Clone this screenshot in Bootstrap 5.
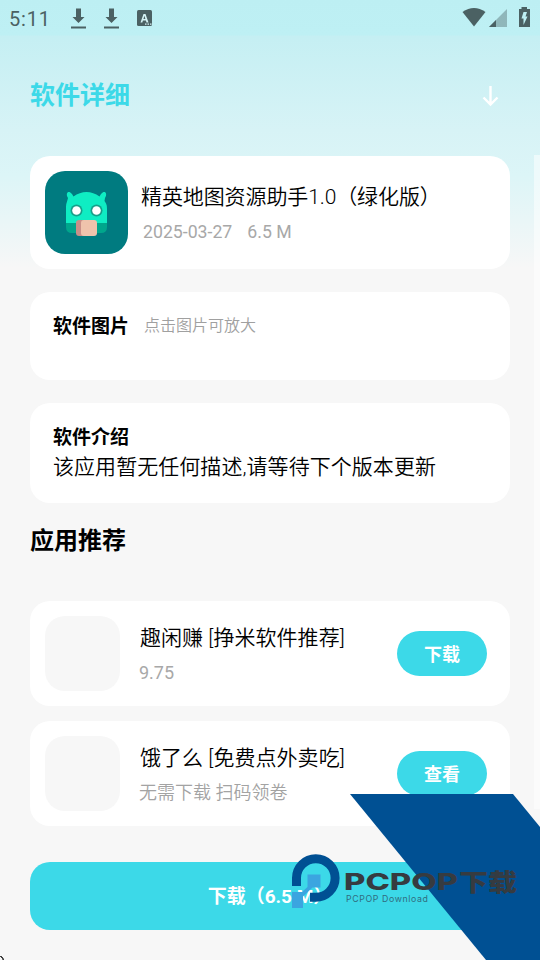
<!DOCTYPE html>
<html lang="zh-CN">
<head>
<meta charset="utf-8">
<meta name="viewport" content="width=device-width, initial-scale=1">
<title>软件详细</title>
<link href="https://cdn.jsdelivr.net/npm/bootstrap@5.3.0/dist/css/bootstrap.min.css" rel="stylesheet">
<style>
body{font-family:Roboto,"Noto Sans CJK SC",sans-serif;background:#f7f7f7;color:#000}
.screen{width:540px;height:960px;background:linear-gradient(#bdeff3 0,#bef0f4 35px,#c5eff3 36px,#d7f3f6 130px,#dcf5f7 175px,#f7f7f7 268px)}
.status{height:36px;color:#4b6163;font-size:20px;letter-spacing:.8px}
.status svg,.head svg,.logo,.brand{display:block;flex:none}
.clock{width:59px;line-height:36px;padding-top:1px;padding-left:9px}
.head{height:120px}
.page-title{font-size:25px;line-height:36px;font-weight:700;color:#3cd9e8;padding:42px 0 0 30px}
.content{width:480px}
.panel{background:#fff;border-radius:20px}
.app{height:113px;padding:15px}
.app-info{padding:11px 0 0 13px}
.shots{height:88px;margin-top:23px;padding:23px 23px;gap:15px}
.about{height:100px;margin-top:23px;padding:23px 23px}
.name{font-size:21px;line-height:30px;font-weight:350;white-space:nowrap}
.app .name{letter-spacing:-.1px}
.about .name{margin-top:2px;letter-spacing:.05px}
.sub{font-size:18px;line-height:24px;color:#a3a3a3;white-space:nowrap;font-weight:350}
.sub-num{font-weight:400;color:#a8a8a8}
.app .sub{font-size:17.700px;gap:15px;margin-top:8px;padding-left:2px}
.ttl{font-size:19px;line-height:24px;font-weight:700}
.hint{font-size:16px;line-height:22px;font-weight:350;color:#a0a0a0}
.section-title{font-size:24px;line-height:34px;font-weight:700;margin-top:21px;margin-bottom:43px}
.rec{height:105px;padding:15px 23px 15px 15px}
.rec + .rec{margin-top:15px}
.rec-info{margin-left:19px}
.rec-info .name{padding-left:1px;letter-spacing:.05px}
.thumb{width:75px;height:75px;border-radius:20px;background:#f7f7f7;flex:none}
.pill{width:90px;height:45px;border-radius:23px;background:#3cd9e8;color:#fff;font-size:18px;font-weight:700;padding:2px 0 0}
.main-btn{height:68px;border-radius:20px;background:#3cd9e8;color:#fff;font-size:19px;font-weight:700;margin-top:36px;padding:2px 0 0}
.track{right:0;top:155px;width:6px;height:654px;background:rgba(255,255,255,.5)}
.brand{left:280px;top:790px}
.corner{left:0;bottom:0}
</style>
<script src="https://cdn.jsdelivr.net/npm/bootstrap@5.3.0/dist/js/bootstrap.bundle.min.js"></script>
</head>
<body>
<div class="screen position-relative overflow-hidden">
  <div class="status d-flex">
    <div class="clock">5:11</div>
    <svg width="120" height="36" viewBox="59 0 120 36" fill="currentColor"><g id="dl"><path d="M76 8.500h5v8.500h3.500l-6 6-6-6h3.500z"/><path d="M71 26.500h15v2H71z"/></g><use href="#dl" x="33"/><rect x="137" y="10" width="15" height="16" rx="1.500"/><path d="M140.500 22.500l3-8.500h2l3 8.500h-2l-.6-2h-3l-.6 2zm2.900-3.600h2l-1-3.200zM145 23.500h1.500v1.300H145zm2.500 0h1.500v1.300h-1.500zm2.500 0h1.500v1.300H150z" fill="#d6f4f6"/></svg>
    <svg class="ms-auto" width="80" height="36" viewBox="460 0 80 36" fill="currentColor"><path d="M462.500 12q11.500-8 23 0L474 26.500z"/><path d="M507 9v18h-18z" opacity=".4"/><path d="M496 20v7h-7z"/><path d="M519 9h2.500V7h5.500v2h3v18h-11z"/><path d="M523.500 12h3.500l-1.500 4.500h2l-4 8.500v-6.500h-2z" fill="#bdeff3"/></svg>
  </div>
  <div class="head d-flex justify-content-between">
    <div class="page-title">软件详细</div>
    <svg width="60" height="120" viewBox="480 36 60 120" fill="none" stroke="#fff" stroke-width="2.400"><path d="M490.500 86v18M483.500 97.500l7 7 7-7"/></svg>
  </div>
  <main class="content mx-auto">
    <section class="panel app d-flex">
      <svg class="logo" width="83" height="83" viewBox="0 0 83 83"><rect width="83" height="83" rx="20" fill="#007b80"/><path d="M21 53V36c0-4 1.500-6 2-9-3-5 .5-8.500 4-4l1.500 2.500c8-6 18-6 26 0L56 23c3.500-4.500 7-1 4 4l-.5 3c2 3 2.500 4 2.500 8v15z" fill="#0fedc3"/><path d="M21 52h41v4q0 6-6 6H27q-6 0-6-6z" fill="#00a68c"/><circle cx="31.500" cy="39.500" r="6" fill="#17a08a"/><circle cx="51.500" cy="39.500" r="6" fill="#17a08a"/><circle cx="31.500" cy="39.500" r="4.300" fill="#fff"/><circle cx="51.500" cy="39.500" r="4.300" fill="#fff"/><rect x="31" y="49" width="15" height="16" rx="3" fill="#c98f88"/><rect x="36" y="49" width="16" height="16" rx="3" fill="#efc3ac"/></svg>
      <div class="app-info"><div class="name">精英地图资源助手1.0（绿化版）</div><div class="sub sub-num d-flex"><span>2025-03-27</span><span>6.5 M</span></div></div>
    </section>
    <section class="panel shots d-flex"><div class="ttl">软件图片</div><div class="hint">点击图片可放大</div></section>
    <section class="panel about"><div class="ttl">软件介绍</div><div class="name">该应用暂无任何描述,请等待下个版本更新</div></section>
    <h2 class="section-title">应用推荐</h2>
    <section class="panel rec d-flex align-items-center"><div class="thumb"></div><div class="rec-info flex-grow-1"><div class="name">趣闲赚 [挣米软件推荐]</div><div class="sub sub-num mt-2">9.75</div></div><button class="btn pill">下载</button></section>
    <section class="panel rec d-flex align-items-center"><div class="thumb"></div><div class="rec-info flex-grow-1"><div class="name">饿了么 [免费点外卖吃]</div><div class="sub mt-2">无需下载 扫码领卷</div></div><button class="btn pill">查看</button></section>
    <button class="btn main-btn w-100">下载（6.5 M）</button>
  </main>
  <div class="track position-absolute"></div>
  <svg class="brand position-absolute" width="260" height="170" viewBox="280 790 260 170">
    <path d="M350 794h163l27 33v133h-54z" fill="#005093"/>
    <path d="M296.500 886v-8a19.300 19.300 0 1 1 19.300 19.300H310" fill="none" stroke="#005093" stroke-width="9"/>
    <path d="M307.500 874.500h13v13h-8l-9.500 9v11.500h-11v-16h10l5.500-5z" fill="#3ba5e0"/>
    <text x="344" y="890" font-family="Inter, sans-serif" font-weight="800" font-size="23.500" fill="#363b40" textLength="114" lengthAdjust="spacingAndGlyphs">PCPOP</text>
    <text x="459" y="890.500" font-family="Noto Sans CJK SC, sans-serif" font-weight="900" font-size="24" fill="#363b40" textLength="58" lengthAdjust="spacingAndGlyphs">下载</text>
    <text x="346" y="901.500" font-family="Inter, sans-serif" font-size="8.800" fill="#316d7f" textLength="82">PCPOP Download</text>
  </svg>
  <svg class="corner position-absolute" width="4" height="4"><path d="M0 0h1v1h1v1h1v2h1" fill="none" stroke="#000"/></svg>
</div>
</body>
</html>
